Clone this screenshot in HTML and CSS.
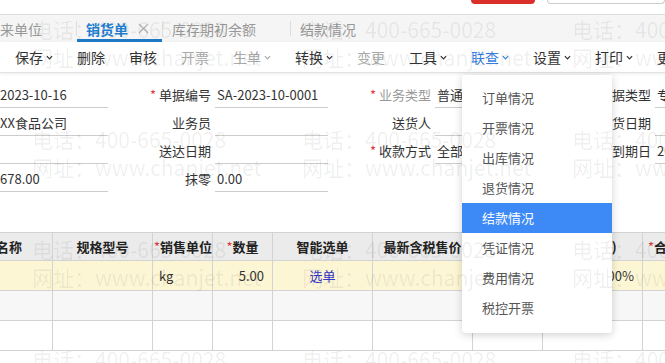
FILE: index.html
```html
<!DOCTYPE html>
<html lang="zh-CN">
<head>
    <meta charset="UTF-8">
    <meta name="viewport" content="width=device-width, initial-scale=1.0">
    <title>销货单</title>
    <link rel="stylesheet" href="styles.css">
</head>
<body>
    <div class="topbar">
        <span class="top-btn"></span>
        <span class="top-search"></span>
    </div>

    <div class="tabs">
        <div class="tab first">往来单位<span class="tab-x"></span></div>
        <span class="tab-sep"></span>
        <div class="tab active">销货单<span class="tab-x"><svg width="11" height="11" viewBox="0 0 11 11"><path d="M1 1L10 10M10 1L1 10" stroke="#b4b4b4" stroke-width="1.2" fill="none"/></svg></span></div>
        <span class="tab-sep"></span>
        <div class="tab">库存期初余额<span class="tab-x"></span></div>
        <span class="tab-sep"></span>
        <div class="tab">结款情况<span class="tab-x"></span></div>
    </div>

    <div class="toolbar">
        <span class="tb">保存<svg viewBox="0 0 8 5"><path d="M1 1L4 4L7 1" stroke="currentColor" stroke-width="1.4" fill="none"/></svg></span>
        <span class="tb">删除</span>
        <span class="tb">审核</span>
        <span class="tb off">开票</span>
        <span class="tb off">生单<svg viewBox="0 0 8 5"><path d="M1 1L4 4L7 1" stroke="currentColor" stroke-width="1.4" fill="none"/></svg></span>
        <span class="tb">转换<svg viewBox="0 0 8 5"><path d="M1 1L4 4L7 1" stroke="currentColor" stroke-width="1.4" fill="none"/></svg></span>
        <span class="tb-sep"></span>
        <span class="tb off">变更</span>
        <span class="tb">工具<svg viewBox="0 0 8 5"><path d="M1 1L4 4L7 1" stroke="currentColor" stroke-width="1.4" fill="none"/></svg></span>
        <span class="tb on">联查<svg viewBox="0 0 8 5"><path d="M1 1L4 4L7 1" stroke="currentColor" stroke-width="1.4" fill="none"/></svg></span>
        <span class="tb">设置<svg viewBox="0 0 8 5"><path d="M1 1L4 4L7 1" stroke="currentColor" stroke-width="1.4" fill="none"/></svg></span>
        <span class="tb-sep"></span>
        <span class="tb">打印<svg viewBox="0 0 8 5"><path d="M1 1L4 4L7 1" stroke="currentColor" stroke-width="1.4" fill="none"/></svg></span>
        <span class="tb">更多</span>
    </div>

    <div class="form">
        <div class="frow">
            <div class="fin first">2023-10-16</div>
            <div class="flbl"><i class="req">*</i> 单据编号</div><div class="fin">SA-2023-10-0001</div>
            <div class="flbl muted"><i class="req">*</i> 业务类型</div><div class="fin">普通销售</div>
            <div class="flbl">单据类型</div><div class="fin">专用发票</div>
        </div>
        <div class="frow">
            <div class="fin first">XX食品公司</div>
            <div class="flbl">业务员</div><div class="fin"></div>
            <div class="flbl">送货人</div><div class="fin"></div>
            <div class="flbl">发货日期</div><div class="fin"></div>
        </div>
        <div class="frow">
            <div class="fin first"></div>
            <div class="flbl">送达日期</div><div class="fin"></div>
            <div class="flbl"><i class="req">*</i> 收款方式</div><div class="fin">全部收款</div>
            <div class="flbl">到期日</div><div class="fin">2023-10-16</div>
        </div>
        <div class="frow">
            <div class="fin first">678.00</div>
            <div class="flbl">抹零</div><div class="fin">0.00</div>
            <div class="flbl"></div><div class="fin blank"></div>
            <div class="flbl"></div><div class="fin blank"></div>
        </div>
    </div>

    <table class="grid">
        <colgroup>
            <col style="width:100px"><col style="width:100px"><col style="width:60px"><col style="width:60px">
            <col style="width:100px"><col style="width:100px"><col style="width:70px"><col style="width:100px"><col style="width:100px">
        </colgroup>
        <tr>
            <th class="c-name">商品名称</th>
            <th>规格型号</th>
            <th><i class="req">*</i>销售单位</th>
            <th><i class="req">*</i>数量</th>
            <th>智能选单</th>
            <th>最新含税售价</th>
            <th>含税单价</th>
            <th>税率(%)</th>
            <th class="c-last"><i class="req">*</i>合计金额</th>
        </tr>
        <tr class="cur">
            <td class="c-name"></td>
            <td></td>
            <td>kg</td>
            <td class="num">5.00</td>
            <td class="pick">选单</td>
            <td></td>
            <td></td>
            <td class="num">13.00%</td>
            <td></td>
        </tr>
        <tr class="alt">
            <td class="c-name"></td><td></td><td></td><td></td><td></td><td></td><td></td><td></td><td></td>
        </tr>
        <tr>
            <td class="c-name"></td><td></td><td></td><td></td><td></td><td></td><td></td><td></td><td></td>
        </tr>
    </table>

    <div class="menu">
        <div class="menu-item">订单情况</div>
        <div class="menu-item">开票情况</div>
        <div class="menu-item">出库情况</div>
        <div class="menu-item">退货情况</div>
        <div class="menu-item hover">结款情况</div>
        <div class="menu-item">凭证情况</div>
        <div class="menu-item">费用情况</div>
        <div class="menu-item">税控开票</div>
    </div>

    <div class="watermark">
        <div class="wm">电话：400-665-0028<br>网址：www.chanjet.net</div>
        <div class="wm">电话：400-665-0028<br>网址：www.chanjet.net</div>
        <div class="wm">电话：400-665-0028<br>网址：www.chanjet.net</div>
        <div class="wm">电话：400-665-0028<br>网址：www.chanjet.net</div>
        <div class="wm">电话：400-665-0028<br>网址：www.chanjet.net</div>
        <div class="wm">电话：400-665-0028<br>网址：www.chanjet.net</div>
        <div class="wm">电话：400-665-0028<br>网址：www.chanjet.net</div>
        <div class="wm">电话：400-665-0028<br>网址：www.chanjet.net</div>
        <div class="wm">电话：400-665-0028<br>网址：www.chanjet.net</div>
        <div class="wm">电话：400-665-0028<br>网址：www.chanjet.net</div>
        <div class="wm">电话：400-665-0028<br>网址：www.chanjet.net</div>
        <div class="wm">电话：400-665-0028<br>网址：www.chanjet.net</div>
    </div>
</body>
</html>
```

FILE: styles.css
```css
* {
    box-sizing: border-box;
}
body {
    margin: 0;
    width: 665px;
    height: 363px;
    overflow: hidden;
    position: relative;
    font-family: "Noto Sans CJK SC", "Noto Sans", sans-serif;
    font-size: 13px;
    color: #333;
    background: #fff;
}
.topbar {
    height: 14px;
    display: flex;
    align-items: flex-start;
    padding-left: 471px;
}
.top-btn {
    width: 70px;
    height: 4px;
    background: #d9302c;
    border-radius: 0 0 4px 4px;
}
.top-search {
    margin-left: 12px;
    width: 130px;
    height: 4px;
    border: 1px solid #ccc;
    border-top: none;
    border-radius: 0 0 4px 4px;
}
.tabs {
    height: 28px;
    border-top: 1px solid #ddd;
    background: #f5f5f5;
    display: flex;
    align-items: stretch;
    white-space: nowrap;
    font-size: 14px;
    color: #999;
}
.tab {
    display: flex;
    align-items: center;
    padding: 0 12px 0 9px;
    position: relative;
}
.tab.first {
    margin-left: -23px;
}
.tab.active {
    color: #1f7fd1;
    font-weight: bold;
}
.tab.active::after {
    content: "";
    position: absolute;
    left: 0;
    right: 0;
    bottom: 0;
    height: 3px;
    background: #1f78c3;
}
.tab-x {
    width: 12px;
    margin-left: 10px;
    display: flex;
    align-items: center;
}
.tab-sep {
    width: 1px;
    height: 15px;
    background: #ddd;
    align-self: center;
}
.toolbar {
    height: 31px;
    border-bottom: 1px solid #e3e3e3;
    box-shadow: 0 1px 3px rgba(0, 0, 0, 0.08);
    display: flex;
    align-items: center;
    gap: 24px;
    padding-left: 15px;
    font-size: 14px;
    white-space: nowrap;
    color: #333;
}
.tb {
    display: flex;
    align-items: center;
}
.tb svg {
    width: 7px;
    height: 5px;
    margin-left: 3px;
}
.tb.off {
    color: #aaa;
}
.tb.on {
    color: #3a7fe0;
}
.tb-sep {
    width: 1px;
    height: 14px;
    background: #ccc;
    margin: 0 -12px;
}
.form {
    padding-top: 7px;
}
.frow {
    display: grid;
    grid-template-columns: 108px 103px 117px 103px 117px 103px 117px;
    height: 28px;
}
.fin {
    margin: 4px 0 0 4px;
    height: 24px;
    line-height: 22px;
    border-bottom: 1px solid #ccc;
    padding-left: 2px;
    overflow: hidden;
    white-space: nowrap;
}
.fin.first {
    margin-left: 0;
    padding-left: 0;
}
.fin.blank {
    border-bottom: none;
}
.flbl {
    margin-top: 4px;
    line-height: 22px;
    text-align: right;
    white-space: nowrap;
}
.flbl.muted {
    color: #999;
}
.req {
    color: #e0393e;
    font-style: normal;
    font-weight: normal;
}
.grid {
    margin: 40px 0 0 -48px;
    border-collapse: collapse;
    table-layout: fixed;
    width: 790px;
}
.grid th,
.grid td {
    border: 1px solid #d3d3d3;
    padding: 0 6px;
    white-space: nowrap;
    overflow: hidden;
}
.grid th {
    height: 28px;
    padding: 0 1px;
    background: #ebebeb;
    font-weight: bold;
    color: #222;
    text-align: center;
}
.grid td {
    height: 30px;
}
.grid .c-name {
    text-align: right;
    padding-right: 30px;
}
.grid th.c-last {
    text-align: left;
    padding-left: 5px;
}
.grid tr.cur td {
    background: #fdf6d5;
}
.grid tr.alt td {
    background: #f7f7f7;
}
.grid td.num {
    text-align: right;
    padding-right: 8px;
}
.grid td.pick {
    text-align: center;
    color: #3535c9;
}
.menu {
    position: absolute;
    left: 462px;
    top: 75px;
    width: 150px;
    padding: 8px 0 10px;
    background: #fff;
    border-radius: 0 0 4px 4px;
    box-shadow: 0 2px 8px rgba(0, 0, 0, 0.18);
    z-index: 5;
}
.menu-item {
    height: 30px;
    line-height: 30px;
    padding-left: 20px;
    color: #555;
}
.menu-item.hover {
    background: #3d8af7;
    color: #fff;
}
.watermark {
    position: absolute;
    top: 0;
    left: 0;
    right: 0;
    bottom: 0;
    pointer-events: none;
    z-index: 10;
    overflow: hidden;
    display: grid;
    grid-template-columns: repeat(3, 270px);
    grid-auto-rows: 110px;
    padding: 15px 0 0 32px;
    font-size: 21px;
    line-height: 28px;
    color: rgba(0, 0, 0, 0.07);
    white-space: nowrap;
}
```
